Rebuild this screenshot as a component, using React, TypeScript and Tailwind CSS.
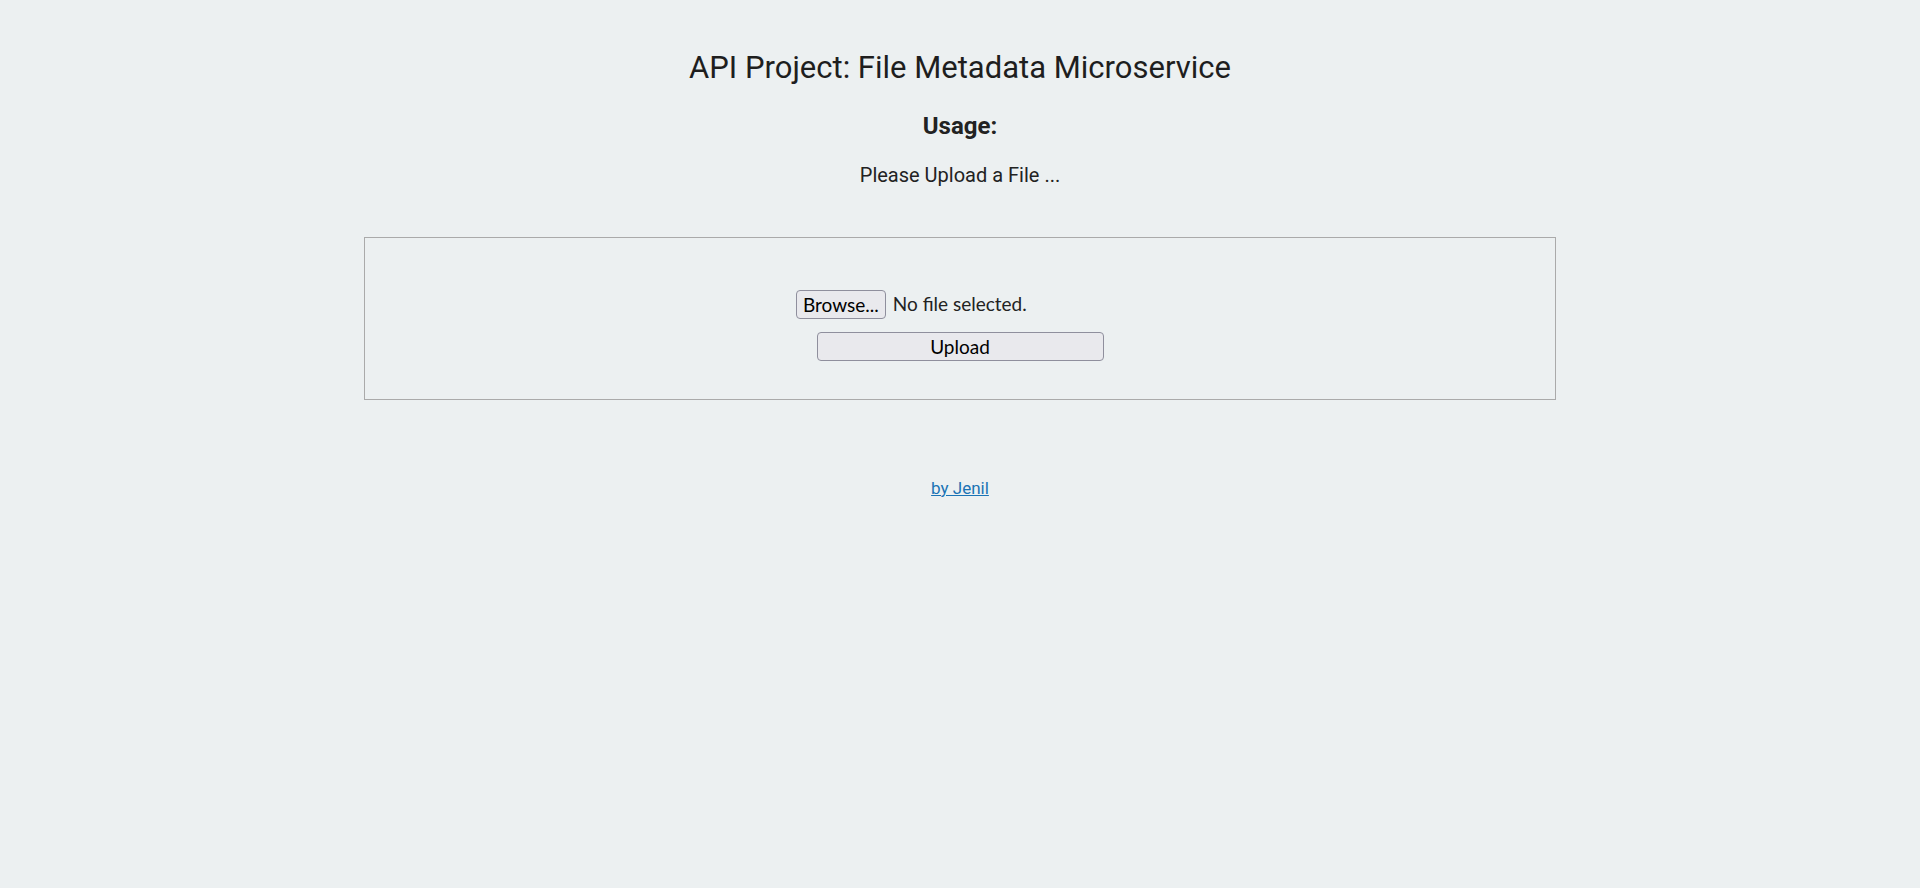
import React from 'react';

const App = () => {
  return (
    <div className="min-h-[888px] bg-[#ecf0f1] text-[#222] text-center font-['Roboto',sans-serif]">
      <div className="pt-[48px]">
        <h1 className="text-[31px] leading-[40px] font-normal text-[#1e1e1e]">API Project: File Metadata Microservice</h1>
        <h3 className="mt-[23px] text-[24px] leading-[30px] font-bold">Usage:</h3>
        <p className="mt-[22px] text-[20px] leading-[24px]">Please Upload a File ...</p>
      </div>

      {/* upload form */}
      <div className="mx-auto mt-[50px] w-[1192px] h-[163px] border border-[#aaa] flex flex-col items-center pt-[52px]">
        <form className="flex flex-col items-center font-['Lato',sans-serif] text-black" onSubmit={(e) => e.preventDefault()}>
          <div className="flex items-center gap-[7px] w-[328px]">
            <button type="button" className="h-[29px] px-[6px] text-[19px] leading-none bg-[#e9e9ed] border border-[#8f8f9d] rounded-[4px]">
              Browse...
            </button>
            <span className="text-[19px] text-[#222]">No file selected.</span>
          </div>
          <button type="submit" className="mt-[13px] w-[287px] h-[29px] text-[19px] leading-none bg-[#e9e9ed] border border-[#8f8f9d] rounded-[4px]">
            Upload
          </button>
        </form>
      </div>

      <div className="mt-[76px]">
        <a href="#" className="text-[17px] text-[#1a73b5] underline">by Jenil</a>
      </div>
    </div>
  );
};

export default App;
